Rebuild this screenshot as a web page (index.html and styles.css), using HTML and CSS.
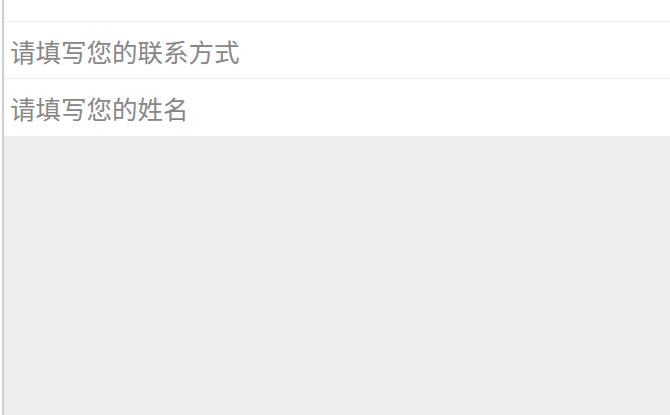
FILE: index.html
```html
<!DOCTYPE html>
<html>
  <head>
    <meta charset="utf-8">
    <title>联系我们</title>
    <link rel="stylesheet" href="styles.css">
  </head>
  <body>
    <div class="page">
      <form class="contact-form">
        <div class="row row-top"></div>
        <div class="row">
          <input type="text" name="contact" placeholder="请填写您的联系方式">
        </div>
        <div class="row">
          <input type="text" name="name" placeholder="请填写您的姓名">
        </div>
      </form>
      <div class="blank"></div>
    </div>
  </body>
</html>
```

FILE: styles.css
```css
html, body {
  height: 100%;
}

body {
  margin: 0;
  background: #fff;
  font-family: "Noto Sans CJK SC", "Noto Sans", sans-serif;
}

.page {
  display: flex;
  flex-direction: column;
  height: 100vh;
  margin-left: 2px;
  border-left: 2px solid #cfcfcf;
  box-sizing: border-box;
}

.contact-form {
  display: flex;
  flex-direction: column;
  margin: 0;
}

.row {
  height: 56px;
  border-bottom: 1px solid #f0f0f0;
  display: flex;
  align-items: center;
}

.row-top {
  height: 21px;
}

.row:last-child {
  height: 57px;
  border-bottom: none;
}

.row input {
  width: 100%;
  border: none;
  outline: none;
  background: transparent;
  padding: 0 0 0 6px;
  font-family: "Noto Sans CJK SC", "Noto Sans", sans-serif;
  font-size: 25.5px;
  color: #555;
}

.row input::placeholder {
  color: #878787;
}

.blank {
  flex: 1;
  background: #eeeeee;
}
```
